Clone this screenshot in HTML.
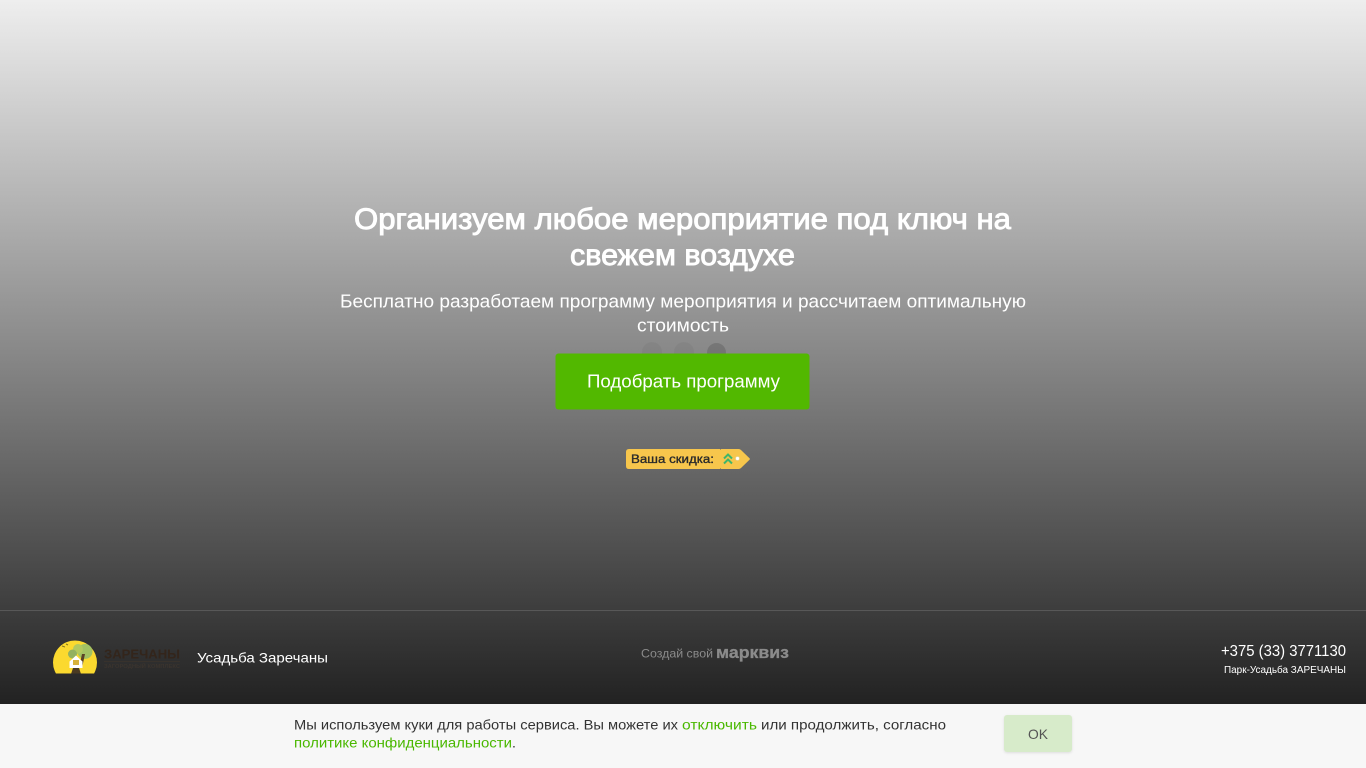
<!DOCTYPE html>
<html lang="ru"><head><meta charset="utf-8"><title>Усадьба Заречаны</title>
<style>
html,body{margin:0;padding:0;width:1366px;height:768px;overflow:hidden;background:#f7f7f7}
svg{position:absolute;left:0;top:0;display:block}
text{font-family:"Liberation Sans","DejaVu Sans",sans-serif;white-space:pre}
</style></head><body>
<svg width="1366" height="768" viewBox="0 0 1366 768" xmlns="http://www.w3.org/2000/svg">
<defs>
<linearGradient id="g" x1="0" y1="0" x2="0" y2="1"><stop offset="0" stop-color="#eeeeee"/><stop offset="1" stop-color="#222"/></linearGradient>
<filter id="sh" x="-10%" y="-10%" width="120%" height="130%"><feDropShadow dx="0" dy="1" stdDeviation="1.2" flood-color="#000" flood-opacity=".1"/></filter>
<clipPath id="lc"><rect x="50" y="636" width="60" height="37.5"/></clipPath>
</defs>
<rect width="1366" height="704" fill="url(#g)"/>
<rect y="610" width="1366" height="1" fill="#fff" fill-opacity=".14"/>

<circle cx="652" cy="352" r="10" fill="#000" fill-opacity=".04"/>
<circle cx="684" cy="352" r="10" fill="#000" fill-opacity=".04"/>
<circle cx="716.500" cy="352.500" r="9.500" fill="#000" fill-opacity=".14"/>

<g fill="#fff">
<text x="354" y="229" font-size="30" stroke="#fff" stroke-width=".9" textLength="657" lengthAdjust="spacingAndGlyphs">Организуем любое мероприятие под ключ на</text>
<text x="570" y="265" font-size="30" stroke="#fff" stroke-width=".9" textLength="225" lengthAdjust="spacingAndGlyphs">свежем воздухе</text>
<text x="340" y="307.500" font-size="18" textLength="686" lengthAdjust="spacingAndGlyphs">Бесплатно разработаем программу мероприятия и рассчитаем оптимальную</text>
<text x="637" y="331.500" font-size="18" textLength="92" lengthAdjust="spacingAndGlyphs">стоимость</text>
</g>

<rect x="555.500" y="353.500" width="254" height="56" rx="3" fill="#52b800"/>
<text x="587" y="387.500" font-size="18" fill="#fff" textLength="193" lengthAdjust="spacingAndGlyphs">Подобрать программу</text>

<path d="M629 449H738.500Q740 449 741 450L749.500 458.200Q750.300 459 749.500 459.800L741 468Q740 469 738.500 469H629Q626 469 626 466V452Q626 449 629 449Z" fill="#f7c64c"/>
<rect x="720" y="448.500" width="1" height="1" fill="#666"/>
<rect x="720" y="468.500" width="1" height="1" fill="#666"/>
<text x="631" y="463" font-size="11.500" fill="#2b2b2b" stroke="#2b2b2b" stroke-width=".35" textLength="83" lengthAdjust="spacingAndGlyphs">Ваша скидка:</text>
<path d="M724 458.500L728 454.500L732 458.500M724 463.500L728 459.500L732 463.500" fill="none" stroke="#3fb66b" stroke-width="2"/>
<circle cx="737.500" cy="458.500" r="2" fill="#fff" stroke="#e8d28a" stroke-width=".8"/>

<g clip-path="url(#lc)">
<circle cx="75" cy="662.500" r="22" fill="#fbd92f"/>
<circle cx="85" cy="651.500" r="7.500" fill="#a3c263"/>
<circle cx="78" cy="649" r="5" fill="#b3c95e"/>
<circle cx="72.500" cy="654" r="4.500" fill="#93b160"/>
<path d="M82 654L79 668H82L85 654Z" fill="#5b4326"/>
<path d="M69.500 661.500L76 655.500L82.500 661.500V668H69.500Z" fill="#fff"/>
<rect x="73" y="660" width="6" height="5" fill="#d8b23a"/>
<path d="M73 668H79L81 674H71Z" fill="#4a3a22"/>
<path d="M62 646l3 1M66 644l2 1" stroke="#8a7a1c" stroke-width="1"/>
</g>
<text x="104" y="658.500" font-size="13" font-weight="bold" fill="#33251b" textLength="76" lengthAdjust="spacingAndGlyphs">ЗАРЕЧАНЫ</text>
<rect x="104" y="661" width="76" height=".6" fill="#40352b"/>
<text x="104" y="668" font-size="5" font-weight="bold" fill="#3f362e" fill-opacity=".8" textLength="76" lengthAdjust="spacingAndGlyphs">ЗАГОРОДНЫЙ КОМПЛЕКС</text>
<text x="197" y="662.500" font-size="14" fill="#fff" textLength="131" lengthAdjust="spacingAndGlyphs">Усадьба Заречаны</text>

<text x="641" y="657.500" font-size="12" fill="#8b8b8b" textLength="72" lengthAdjust="spacingAndGlyphs">Создай свой</text>
<text x="716" y="658" font-size="16.500" font-weight="bold" fill="#8b8b8b" stroke="#8b8b8b" stroke-width=".3" textLength="73" lengthAdjust="spacingAndGlyphs">марквиз</text>

<text x="1221" y="656" font-size="16" fill="#fff" textLength="125" lengthAdjust="spacingAndGlyphs">+375 (33) 3771130</text>
<text x="1224" y="673" font-size="10" fill="#fff" textLength="122" lengthAdjust="spacingAndGlyphs">Парк-Усадьба ЗАРЕЧАНЫ</text>

<rect y="704" width="1366" height="64" fill="#f7f7f7"/>
<g font-size="14">
<text x="294" y="729.500" fill="#333" textLength="384" lengthAdjust="spacingAndGlyphs">Мы используем куки для работы сервиса. Вы можете их</text>
<text x="682" y="729.500" fill="#4ab800" textLength="75" lengthAdjust="spacingAndGlyphs">отключить</text>
<text x="761" y="729.500" fill="#333" textLength="185" lengthAdjust="spacingAndGlyphs">или продолжить, согласно</text>
<text x="294" y="747.500" fill="#4ab800" textLength="218" lengthAdjust="spacingAndGlyphs">политике конфиденциальности</text>
<text x="512" y="747.500" fill="#333">.</text>
</g>
<rect x="1004" y="715" width="68" height="37" rx="3" fill="#d7ebca" filter="url(#sh)"/>
<text x="1028" y="739" font-size="14" fill="#555" textLength="20" lengthAdjust="spacingAndGlyphs">OK</text>
</svg>
</body></html>
